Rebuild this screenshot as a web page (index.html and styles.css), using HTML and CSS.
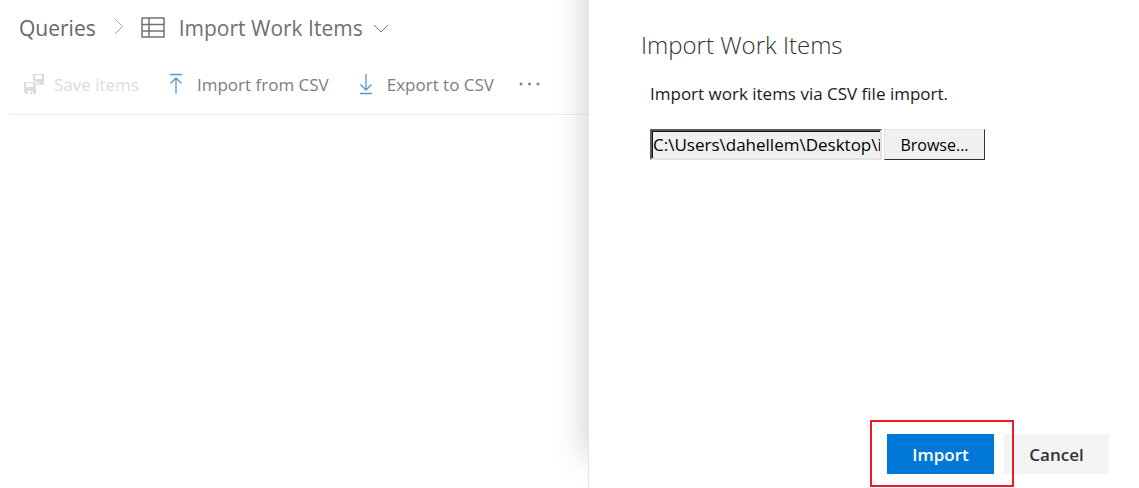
FILE: index.html
```html
<!DOCTYPE html>
<html lang="en">
<head>
<meta charset="utf-8">
<title>Import Work Items</title>
<link rel="stylesheet" href="styles.css">
</head>
<body>
<div class="page">
  <main class="hub">
    <nav class="crumbs" aria-label="Breadcrumb">
      <a class="crumb" href="#">Queries</a>
      <svg class="crumb-sep" width="10" height="20" viewBox="0 0 10 20" aria-hidden="true"><path d="M1 1l7.500 7.500L1 16" fill="none" stroke="#a6a6a6"/></svg>
      <svg class="crumb-icon" width="24" height="22" viewBox="0 0 24 22" aria-hidden="true"><path d="M1 1h22v19H1zM1 7.500h22M1 14h22M8 1v19" fill="none" stroke="#747078" stroke-width="1.500"/></svg>
      <button class="title" type="button">Import Work Items
        <svg width="16" height="10" viewBox="0 0 16 10" aria-hidden="true"><path d="M1 2l7 7 7-7" fill="none" stroke="#777"/></svg>
      </button>
    </nav>
    <div class="toolbar" role="toolbar">
      <button class="tool" type="button" disabled>
        <svg width="22" height="22" viewBox="0 0 22 22" aria-hidden="true">
          <path fill="#dcdcdc" fill-rule="evenodd" d="M10 1h11v11h-7v-2h-1V8h-3zM12 2v4h7V2zM15 9v2h1V9zM1 9h11l1 2v10h-3v-3H5v3H3l-2-2zM3 10v4h7v-4zM7 19h2v2H7z"/>
        </svg>
        Save items
      </button>
      <button class="tool import" type="button">
        <svg width="14" height="22" viewBox="0 0 14 22" aria-hidden="true"><path d="M1 1.500h12M7 21V5M1.500 10.500L7 5l5.500 5.500" fill="none" stroke="#5c97cc" stroke-width="1.300"/></svg>
        Import from CSV
      </button>
      <button class="tool export" type="button">
        <svg width="14" height="22" viewBox="0 0 14 22" aria-hidden="true"><path d="M1 20.500h12M7 1v16M1.500 11.500L7 17l5.500-5.500" fill="none" stroke="#5c97cc" stroke-width="1.300"/></svg>
        Export to CSV
      </button>
      <button class="tool more" type="button" aria-label="More actions">
        <svg width="24" height="4" viewBox="0 0 24 4" aria-hidden="true"><g fill="#858585"><circle cx="3" cy="2" r="1.500"/><circle cx="11.500" cy="2" r="1.500"/><circle cx="20" cy="2" r="1.500"/></g></svg>
      </button>
    </div>
  </main>
  <aside class="panel">
    <h2 class="panel-title">Import Work Items</h2>
    <div class="panel-body">
      <label class="hint" for="file">Import work items via CSV file import.</label>
      <div class="file-row">
        <input class="file-path" id="file" type="text" readonly value="C:\Users\dahellem\Desktop\import.csv">
        <button class="browse" type="button">Browse...</button>
      </div>
    </div>
    <div class="actions">
      <div class="marked"><button class="action primary" type="button">Import</button></div>
      <button class="action" type="button">Cancel</button>
    </div>
  </aside>
</div>
</body>
</html>
```
FILE: styles.css
```css
* { box-sizing: border-box; }
body {
  margin: 0;
  background: #fff;
  font-family: "Open Sans", "Noto Sans", sans-serif;
  font-size: 17px;
}
button, input { font: inherit; }
svg { flex: none; }
.page { display: flex; min-height: 100vh; }
.hub {
  position: relative;
  flex: 1;
  min-width: 0;
  overflow: hidden;
}
/* shade cast by the panel on the page beneath it */
.hub::after {
  content: "";
  position: absolute;
  top: -40px;
  bottom: 30px;
  right: -20px;
  width: 20px;
  box-shadow: 0 0 32px rgba(0, 0, 0, .25);
}
.crumbs {
  display: flex;
  align-items: center;
  height: 56px;
  padding-left: 19px;
  font-size: 21px;
  white-space: nowrap;
}
.crumb { color: #666; text-decoration: none; }
.crumb-sep { margin-left: 18px; }
.crumb-icon { margin-left: 17px; }
.title {
  display: flex;
  align-items: center;
  gap: 10px;
  margin-left: 14px;
  padding: 0;
  border: 0;
  background: none;
  color: #707070;
}
.toolbar {
  display: flex;
  height: 59px;
  margin-left: 9px;
  padding: 0 0 2px 14px;
  border-bottom: 1px solid #ededed;
}
.tool {
  display: flex;
  align-items: center;
  gap: 9px;
  padding: 0;
  border: 0;
  background: none;
  color: #7d7d7d;
  white-space: nowrap;
}
.tool:disabled { color: #dcdcdc; }
.import, .export { gap: 14px; margin-left: 30px; }
.more { margin-left: 24px; }
.panel {
  display: flex;
  flex-direction: column;
  width: 551px;
  border-left: 1px solid #e4e4e4;
  background: #fff;
}
.panel-title {
  margin: 28px 0 0 52px;
  color: #333;
  font-size: 24px;
  font-weight: 300;
  line-height: 34px;
}
.panel-body { padding: 20px 30px 20px 61px; }
.hint { display: block; color: #1a1a1a; line-height: 24px; }
.file-row { display: flex; gap: 2px; margin-top: 23px; }
.file-path {
  width: 232px;
  height: 31px;
  padding: 0 0 0 1px;
  border: 2px solid;
  border-color: #5c5c5c #e3e3e3 #e3e3e3 #5c5c5c;
  box-shadow: inset 1px 1px #111;
  background: #f0f0f0;
  color: #000;
}
.browse {
  width: 101px;
  height: 31px;
  padding: 0;
  border: 1px solid;
  border-color: #e3e3e3 #333 #333 #e3e3e3;
  background: #f0f0f0;
  color: #000;
  font-size: 16px;
}
.actions {
  display: flex;
  justify-content: flex-end;
  gap: 10px;
  margin-top: auto;
  padding: 0 30px 14px 0;
}
.action {
  width: 105px;
  height: 40px;
  padding: 0;
  border: 0;
  background: #f4f4f4;
  color: #333;
  font-weight: 600;
}
.primary { width: 107px; background: #0078d7; color: #fff; }
.marked { position: relative; }
/* red callout drawn over the primary action */
.marked::after {
  content: "";
  position: absolute;
  inset: -14px -20px -13px -17px;
  border: 2px solid #ed1c24;
  pointer-events: none;
}
```
